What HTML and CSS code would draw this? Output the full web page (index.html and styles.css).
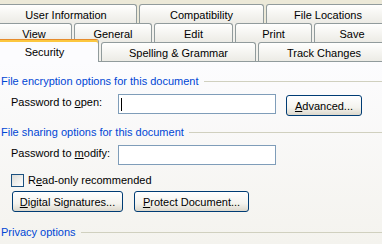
FILE: index.html
```html
<!DOCTYPE html>
<html lang="en">
<head>
    <meta charset="UTF-8">
    <title>Options - Security</title>
    <link rel="stylesheet" href="styles.css">
</head>
<body>
    <div class="tabs">
        <div class="tab-row row-top">
            <div class="tab tab-user">User Information</div>
            <div class="tab tab-compat">Compatibility</div>
            <div class="tab tab-files">File Locations</div>
        </div>
        <div class="tab-row row-mid">
            <div class="tab tab-view">View</div>
            <div class="tab tab-general">General</div>
            <div class="tab tab-edit">Edit</div>
            <div class="tab tab-print">Print</div>
            <div class="tab tab-save">Save</div>
        </div>
        <div class="tab-row row-bottom">
            <div class="tab tab-security active">Security</div>
            <div class="tab tab-spelling">Spelling &amp; Grammar</div>
            <div class="tab tab-track">Track Changes</div>
        </div>
    </div>

    <div class="panel">
        <div class="group-title first">
            <span>File encryption options for this document</span>
            <div class="rule"></div>
        </div>
        <div class="field-row">
            <label class="field-label">Password to <u>o</u>pen:</label>
            <div class="field"><span class="caret"></span></div>
            <button class="btn btn-advanced"><u>A</u>dvanced...</button>
        </div>

        <div class="group-title">
            <span>File sharing options for this document</span>
            <div class="rule"></div>
        </div>
        <div class="field-row">
            <label class="field-label">Password to <u>m</u>odify:</label>
            <div class="field"></div>
        </div>
        <div class="check-row">
            <span class="checkbox"></span>
            <span>R<u>e</u>ad-only recommended</span>
        </div>
        <div class="button-row">
            <button class="btn btn-signatures"><u>D</u>igital Signatures...</button>
            <button class="btn btn-protect"><u>P</u>rotect Document...</button>
        </div>

        <div class="group-title last">
            <span>Privacy options</span>
            <div class="rule"></div>
        </div>
    </div>
</body>
</html>
```

FILE: styles.css
```css
body {
    margin: 0;
    width: 382px;
    height: 244px;
    overflow: hidden;
    background-color: #ece9d8;
    font-family: "Liberation Sans", Arial, sans-serif;
    font-size: 11px;
    color: #000000;
}

/* tab strip */

.tabs {
    padding-top: 4px;
}

.tab-row {
    display: flex;
    align-items: flex-end;
    gap: 2px;
    height: 19px;
}

.row-mid,
.row-bottom {
    background-color: #f2f1ec;
}

.tab {
    box-sizing: border-box;
    flex: none;
    height: 19px;
    padding-top: 4px;
    line-height: 13px;
    text-align: center;
    white-space: nowrap;
    border: 1px solid #919b9c;
    border-bottom: none;
    border-radius: 3px 3px 0 0;
    background: linear-gradient(#fffffe, #ecebe5);
}

.tab-user { width: 142px; margin-left: -5px; }
.tab-compat { width: 125px; }
.tab-files { width: 124px; }

.tab-view { width: 76px; margin-left: -4px; }
.tab-general { width: 78px; }
.tab-edit { width: 79px; }
.tab-print { width: 77px; }
.tab-save { width: 76px; }

.tab-security { width: 109px; margin-left: -10px; }
.tab-spelling { width: 155px; }
.tab-track { width: 132px; }

.tab.active {
    position: relative;
    z-index: 1;
    height: 23px;
    margin-bottom: -1px;
    padding-top: 6px;
    border-top: 1px solid #e68b2c;
    background: #fcfcfe;
    box-shadow: inset 0 2px 0 #fcc73f;
}

/* page body */

.panel {
    box-sizing: border-box;
    height: 183px;
    padding: 13px 0 0 1px;
    border-top: 1px solid #919b9c;
    background: linear-gradient(#fcfcfe, #f4f3ee);
}

.group-title {
    display: flex;
    align-items: center;
    line-height: 13px;
    color: #0046d5;
}

.group-title .rule {
    flex: 1;
    height: 1px;
    margin-left: 5px;
    background-color: #d0d0bf;
}

.field-row {
    display: flex;
    align-items: flex-start;
    margin: 6px 0 0 10px;
}

.field-label {
    width: 107px;
    padding-top: 2px;
    line-height: 13px;
}

.field {
    box-sizing: border-box;
    display: flex;
    align-items: center;
    width: 158px;
    height: 20px;
    padding-left: 2px;
    border: 1px solid #7f9db9;
    background-color: #ffffff;
}

.caret {
    width: 1px;
    height: 13px;
    background-color: #000000;
}

.btn {
    box-sizing: border-box;
    height: 21px;
    padding: 0;
    font-family: inherit;
    font-size: 11px;
    color: #000000;
    border: 1px solid #003c74;
    border-radius: 3px;
    background: linear-gradient(#ffffff 0%, #f4f3ee 60%, #dcd8cc 100%);
}

.btn-advanced {
    width: 76px;
    margin: 1px 0 0 10px;
}

.group-title:not(.first) {
    margin-top: 10px;
}

.check-row {
    display: flex;
    align-items: center;
    gap: 4px;
    margin: 9px 0 0 10px;
    line-height: 13px;
}

.checkbox {
    box-sizing: border-box;
    width: 13px;
    height: 13px;
    border: 1px solid #1c5180;
    background: linear-gradient(135deg, #dcdcd7, #ffffff);
}

.button-row {
    display: flex;
    gap: 11px;
    margin: 4px 0 0 11px;
}

.btn-signatures { width: 111px; }
.btn-protect { width: 115px; }

.group-title.last {
    margin-top: 14px;
}
```
